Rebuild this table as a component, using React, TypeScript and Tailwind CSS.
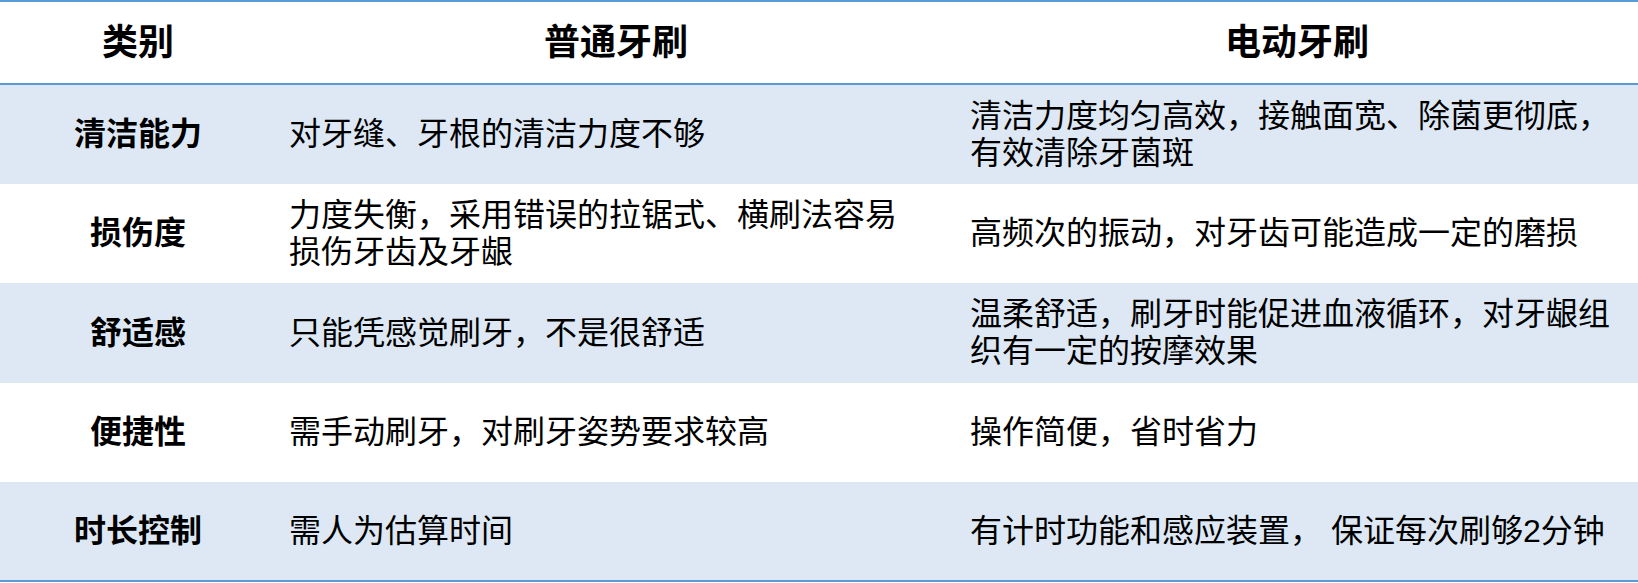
import * as React from "react"

type Row = {
  label: string
  manual: string[]
  electric: string[]
  shaded: boolean
  height: string
}

const ROWS: Row[] = [
  {
    label: "清洁能力",
    manual: ["对牙缝、牙根的清洁力度不够"],
    electric: ["清洁力度均匀高效，接触面宽、除菌更彻底，", "有效清除牙菌斑"],
    shaded: true,
    height: "h-[99px]",
  },
  {
    label: "损伤度",
    manual: ["力度失衡，采用错误的拉锯式、横刷法容易", "损伤牙齿及牙龈"],
    electric: ["高频次的振动，对牙齿可能造成一定的磨损"],
    shaded: false,
    height: "h-[99px]",
  },
  {
    label: "舒适感",
    manual: ["只能凭感觉刷牙，不是很舒适"],
    electric: ["温柔舒适，刷牙时能促进血液循环，对牙龈组", "织有一定的按摩效果"],
    shaded: true,
    height: "h-[100px]",
  },
  {
    label: "便捷性",
    manual: ["需手动刷牙，对刷牙姿势要求较高"],
    electric: ["操作简便，省时省力"],
    shaded: false,
    height: "h-[99px]",
  },
  {
    label: "时长控制",
    manual: ["需人为估算时间"],
    electric: ["有计时功能和感应装置， 保证每次刷够2分钟"],
    shaded: true,
    height: "h-[98px]",
  },
]

function Lines({ lines }: { lines: string[] }) {
  return (
    <div className="flex flex-col whitespace-pre">
      {lines.map((line) => (
        <span key={line}>{line}</span>
      ))}
    </div>
  )
}

export default function App() {
  return (
    <div className="w-[1638px] h-[583px] bg-white font-['Liberation_Sans','Noto_Sans_CJK_SC',sans-serif] text-black">
      <div className="border-y-2 border-[#5b9bd5]">
        {/* header */}
        <div className="grid h-[83px] grid-cols-[276px_680px_682px] border-b-2 border-[#5b9bd5] text-[36px] font-bold leading-none">
          <div className="flex items-center justify-center">类别</div>
          <div className="flex items-center justify-center">普通牙刷</div>
          <div className="flex items-center justify-center">电动牙刷</div>
        </div>

        {ROWS.map((row) => (
          <div
            key={row.label}
            className={`grid grid-cols-[276px_680px_682px] text-[32px] leading-[37px] ${row.height} ${
              row.shaded ? "bg-[#dde8f4]" : "bg-white"
            }`}
          >
            <div className="flex items-center justify-center font-bold">
              {row.label}
            </div>
            <div className="flex items-center pl-[13px]">
              <Lines lines={row.manual} />
            </div>
            <div className="flex items-center pl-[14px]">
              <Lines lines={row.electric} />
            </div>
          </div>
        ))}
      </div>
    </div>
  )
}
